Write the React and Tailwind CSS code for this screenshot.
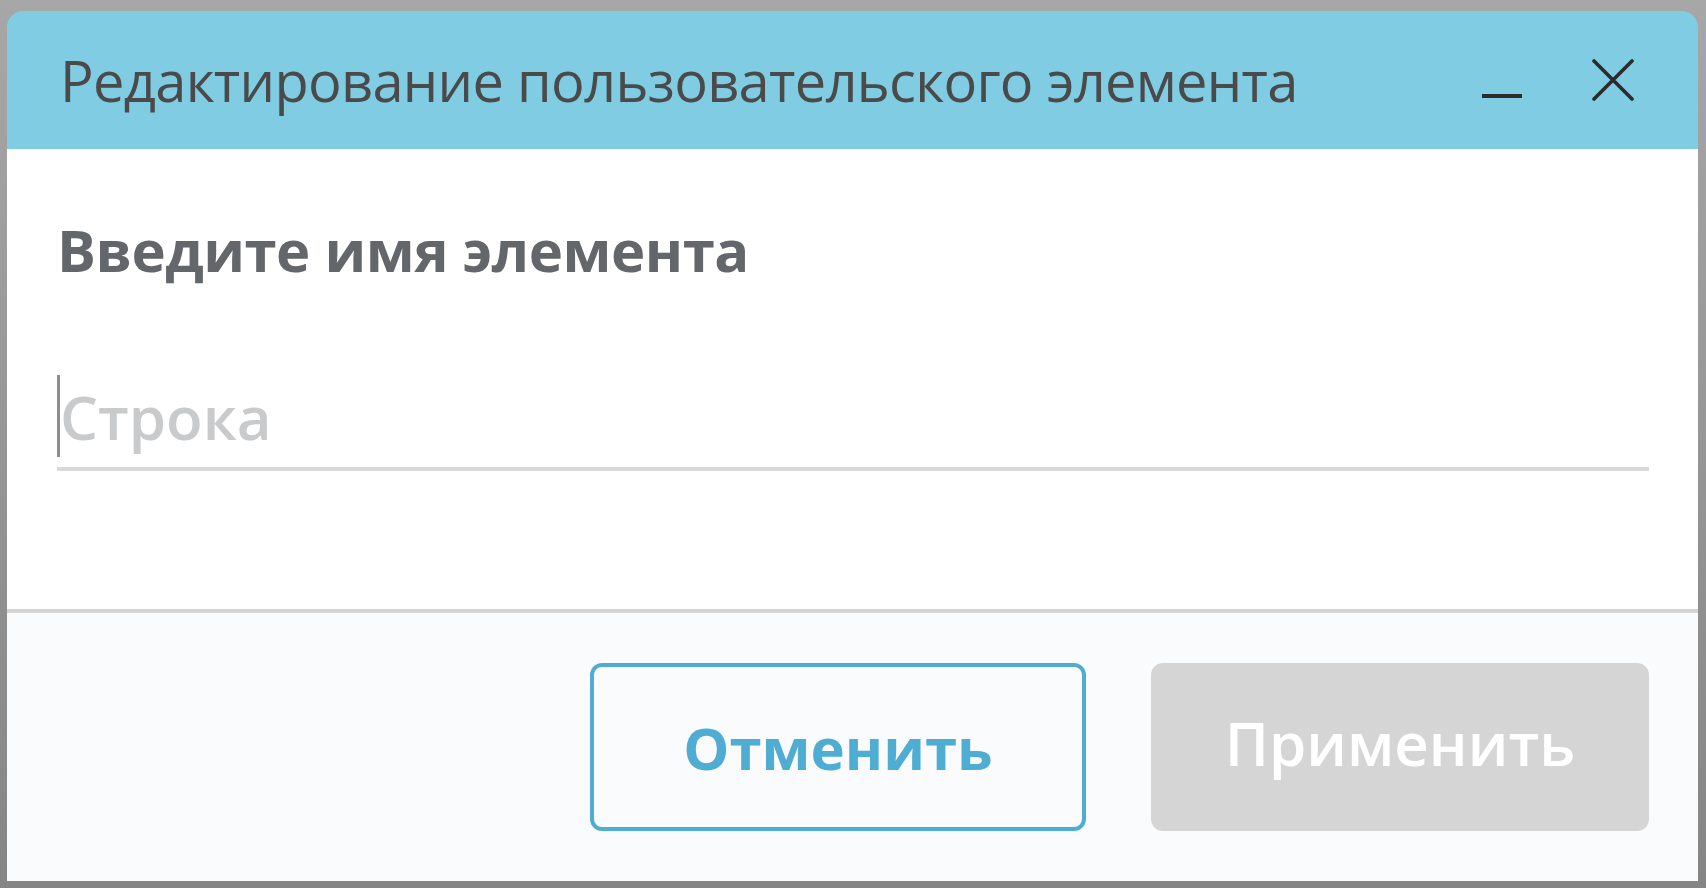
import React, { useState } from 'react';

// ## Dialogo: editar nombre de elemento
export default function App() {
  const [value, setValue] = useState('');

  return (
    <div className="h-screen w-full bg-gradient-to-b from-[#a7a7a7] to-[#858585] pt-[11px] pl-[7px] pr-[8px] pb-[7px] font-['Open_Sans',sans-serif]">
      <div className="flex h-full flex-col overflow-hidden rounded-t-[16px]">
        <header className="flex h-[138px] shrink-0 items-center justify-between bg-[#7fcce3] pl-[53px] pr-[64px]">
          <h1 className="text-[56px] font-normal tracking-[-0.7px] text-[#4a4a4a]">Редактирование пользовательского элемента</h1>
          <div className="flex items-center gap-[70px]">
            <button className="mt-[32px] flex h-[12px] w-[40px] items-center">
              <svg width="40" height="4" viewBox="0 0 40 4">
                <rect x="0" y="0" width="40" height="4" fill="#2b2b2b" />
              </svg>
            </button>
            <button className="flex h-[42px] w-[42px] items-center justify-center">
              <svg width="42" height="42" viewBox="0 0 42 42">
                <path d="M2 2 L40 40 M40 2 L2 40" stroke="#2b2b2b" strokeWidth="3.6" strokeLinecap="round" />
              </svg>
            </button>
          </div>
        </header>

        <section className="flex-1 bg-white pl-[50px] pr-[49px] pt-[57px]">
          <p className="text-[58px] font-bold tracking-[-0.5px] text-[#63666a]">Введите имя элемента</p>
          <div className="relative mt-[84px] border-b-[4px] border-[#d8d9db] pb-[10px]">
            <span className="absolute left-0 top-[-2px] h-[82px] w-[3px] bg-[#8a8d91]" />
            <input
              type="text"
              value={value}
              onChange={(e) => setValue(e.target.value)}
              placeholder="Строка"
              className="w-full bg-transparent pl-[3px] text-[60px] font-semibold leading-[80px] text-[#4a4a4a] placeholder:text-[#c8cacc] focus:outline-none"
            />
          </div>
        </section>

        <footer className="flex h-[272px] shrink-0 items-center justify-end gap-[65px] border-t-[4px] border-[#d4d4d4] bg-[#fafbfd] pr-[49px]">
          <button className="h-[168px] w-[496px] rounded-[12px] border-[4px] border-[#4fadd3] text-[58px] font-bold text-[#4fadd3]">
            Отменить
          </button>
          <button
            disabled
            className="h-[168px] w-[498px] rounded-[12px] bg-[#d5d5d5] pb-[8px] text-[60px] font-semibold text-white"
          >
            Применить
          </button>
        </footer>
      </div>
    </div>
  );
}
